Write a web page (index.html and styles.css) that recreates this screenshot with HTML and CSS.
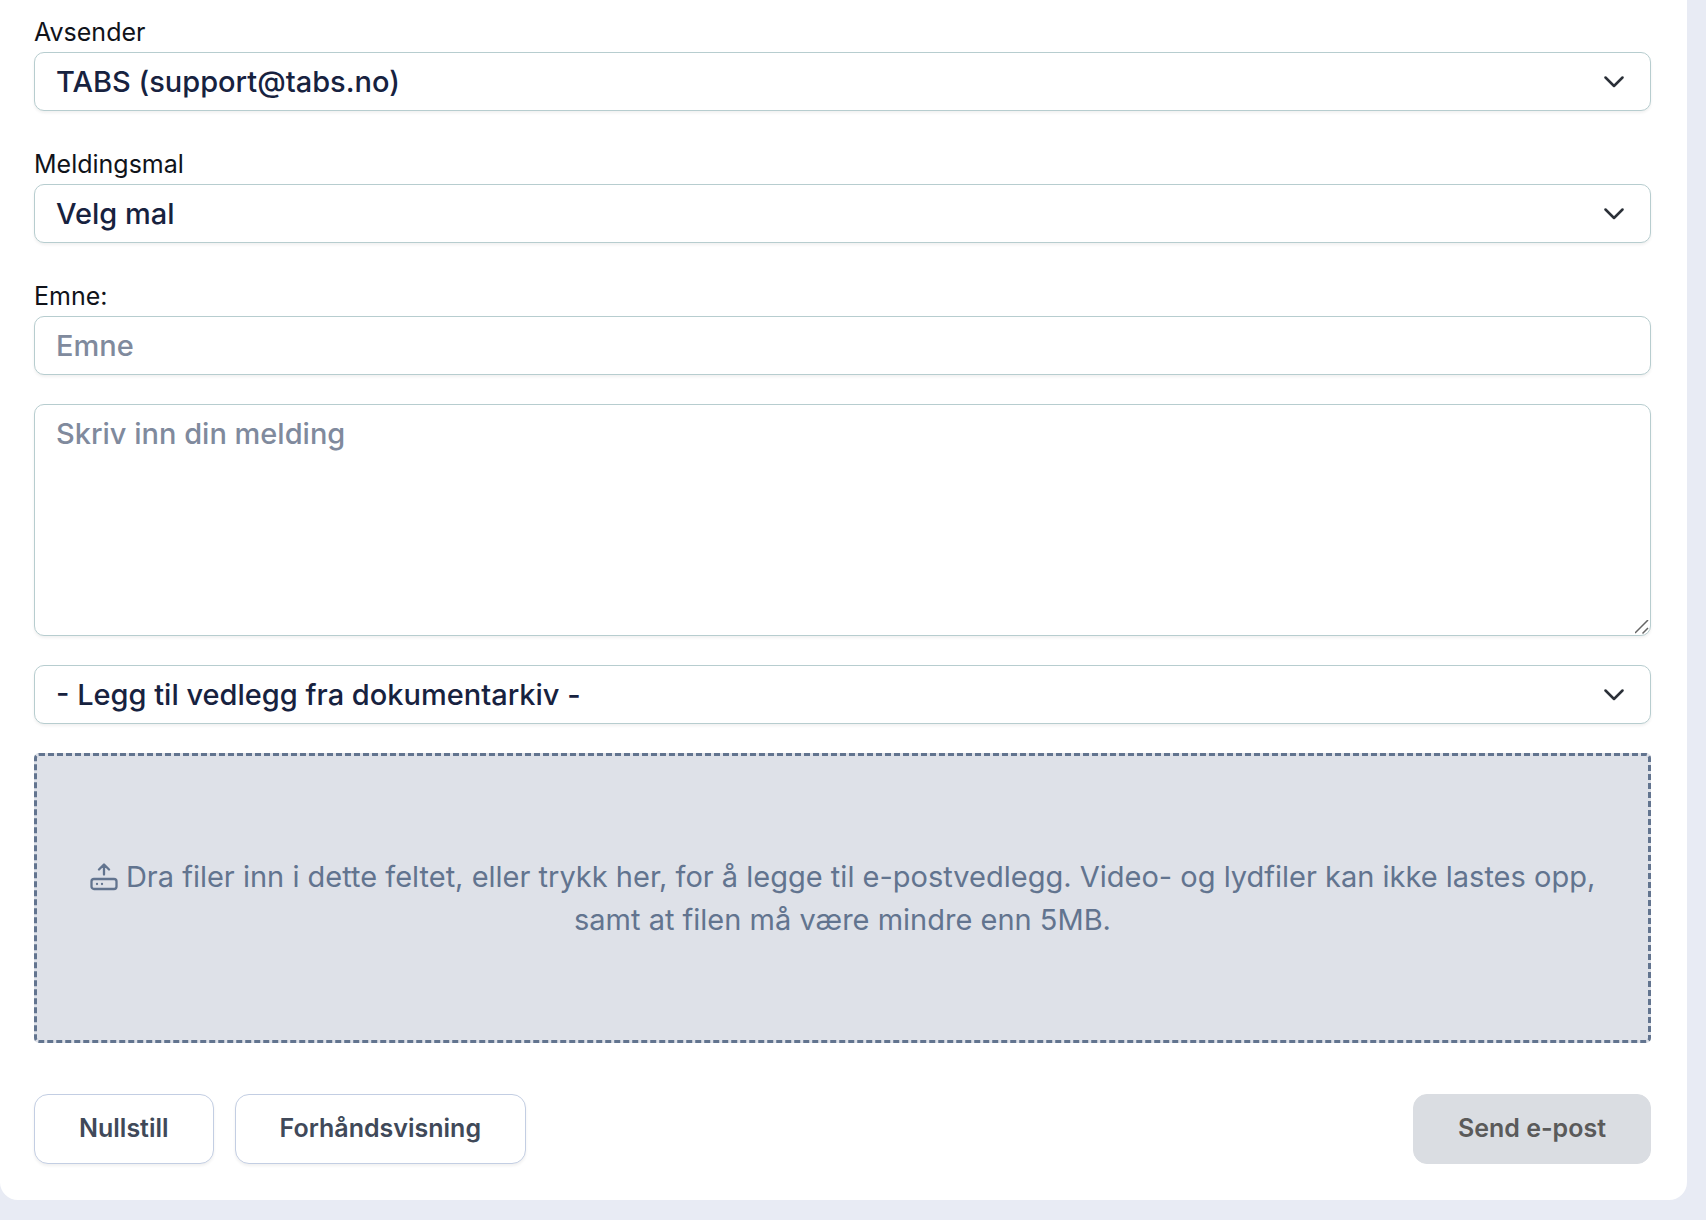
FILE: index.html
```html
<!DOCTYPE html>
<html lang="no">
<head>
  <meta charset="UTF-8">
  <meta name="viewport" content="width=device-width, initial-scale=1.0">
  <title>Send e-post</title>
  <link rel="stylesheet" href="styles.css">
</head>
<body>
  <form class="card">
    <div class="form-group">
      <label for="sender">Avsender</label>
      <select id="sender" class="field">
        <option>TABS (support@tabs.no)</option>
      </select>
    </div>
    <div class="form-group">
      <label for="template">Meldingsmal</label>
      <select id="template" class="field">
        <option>Velg mal</option>
      </select>
    </div>
    <div class="form-group">
      <label for="subject">Emne:</label>
      <input type="text" id="subject" class="field" placeholder="Emne">
    </div>
    <div class="form-group">
      <textarea id="message" class="field" placeholder="Skriv inn din melding" aria-label="Melding"></textarea>
    </div>
    <div class="form-group">
      <select id="archive" class="field" aria-label="Vedlegg">
        <option>- Legg til vedlegg fra dokumentarkiv -</option>
      </select>
    </div>

    <button type="button" class="dropzone">
      <svg class="upload-icon" viewBox="0 0 28 28" fill="none" stroke="currentColor" stroke-width="2.300" stroke-linecap="round" stroke-linejoin="round">
        <path d="M14 11.500V2M9 6.500L14 1.500l5 5"/>
        <rect x="1.500" y="16" width="25" height="10" rx="2.500"/>
        <path d="M7 21h.01M12 21h.01"/>
      </svg>
      Dra filer inn i dette feltet, eller trykk her, for å legge til e-postvedlegg. Video- og lydfiler kan ikke lastes opp, samt at filen må være mindre enn 5MB.
    </button>

    <div class="actions">
      <button type="reset" class="btn">Nullstill</button>
      <button type="button" class="btn">Forhåndsvisning</button>
      <button type="submit" class="btn btn-send" disabled>Send e-post</button>
    </div>
  </form>
</body>
</html>
```
FILE: styles.css
```css
* { box-sizing: border-box; }
body {
  margin: 0;
  background: #e8ebf4;
  font-family: Inter, sans-serif;
  color: #10131a;
}
.card {
  margin-right: 19px;
  padding: 8px 36px 36px 34px;
  background: #fff;
  border-radius: 0 0 18px 18px;
}
.form-group {
  margin-bottom: 29px;
}
label {
  display: block;
  padding: 6px 0 2px;
  font-size: 25px;
  line-height: 36px;
}
.field {
  display: block;
  width: 100%;
  height: 59px;
  padding: 0 21px;
  border: 1px solid #b7cdcf;
  border-radius: 10px;
  background-color: #fff;
  box-shadow: 0 2px 3px rgba(0,0,0,0.06);
  color: #17223f;
  font-family: inherit;
  font-size: 29px;
  font-weight: 500;
}
.field::placeholder {
  color: #808a9d;
  opacity: 1;
}
select.field {
  appearance: none;
  background-image: url("data:image/svg+xml,%3Csvg xmlns='http://www.w3.org/2000/svg' viewBox='0 0 20 12' fill='none' stroke='%232b3038' stroke-width='2.500' stroke-linecap='round' stroke-linejoin='round'%3E%3Cpath d='M1.500 1.500L10 10l8.500-8.500'/%3E%3C/svg%3E");
  background-repeat: no-repeat;
  background-position: right 26px center;
  background-size: 20px 12px;
}
textarea.field {
  height: 232px;
  padding: 11px 21px;
  line-height: 36px;
  resize: vertical;
}
textarea.field::-webkit-resizer {
  background: url("data:image/svg+xml,%3Csvg xmlns='http://www.w3.org/2000/svg' viewBox='0 0 15 15' stroke='%23666' stroke-width='1.500'%3E%3Cpath d='M0 13L13 0M7.500 13.500l5.500-5.500'/%3E%3C/svg%3E") no-repeat center;
}
.dropzone {
  display: block;
  width: 100%;
  height: 290px;
  padding: 0 44px;
  border: 3px dashed #62748f;
  border-radius: 5px;
  background: #dee1e8;
  color: #62748f;
  font-family: inherit;
  font-size: 29px;
  line-height: 43px;
  text-align: center;
  cursor: pointer;
}
.upload-icon {
  width: 28px;
  height: 28px;
  vertical-align: -4px;
}
.actions {
  display: flex;
  gap: 21px;
  margin-top: 51px;
}
.btn {
  height: 70px;
  padding: 0 44px 2px;
  border: 1px solid #c3cee3;
  border-radius: 14px;
  background: #fff;
  box-shadow: 0 2px 3px rgba(0,0,0,0.06);
  color: #404959;
  font-family: inherit;
  font-size: 25px;
  font-weight: 600;
  cursor: pointer;
}
.btn-send {
  margin-left: auto;
  border-color: #dadde2;
  background: #dadde2;
  box-shadow: none;
  color: #5a5a5a;
  cursor: default;
}
```
